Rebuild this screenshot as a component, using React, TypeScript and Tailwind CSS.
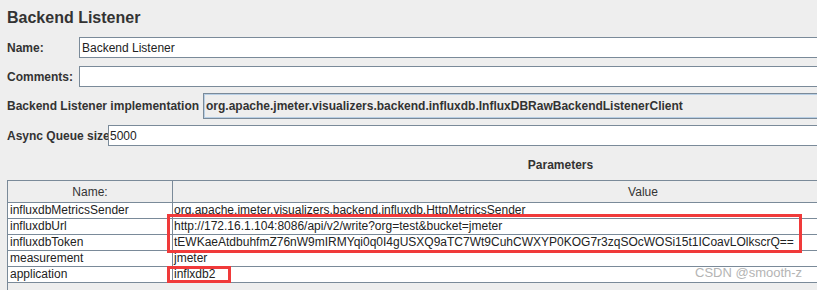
import React from "react";

const params: [string, string][] = [
  ["influxdbMetricsSender", "org.apache.jmeter.visualizers.backend.influxdb.HttpMetricsSender"],
  ["influxdbUrl", "http://172.16.1.104:8086/api/v2/write?org=test&bucket=jmeter"],
  ["influxdbToken", "tEWKaeAtdbuhfmZ76nW9mIRMYqi0q0I4gUSXQ9aTC7Wt9CuhCWXYP0KOG7r3zqSOcWOSi15t1ICoavLOlkscrQ=="],
  ["measurement", "jmeter"],
  ["application", "inflxdb2"],
];

export default function App() {
  return (
    <div className="relative w-[817px] h-[290px] overflow-hidden bg-[#eeeeee] font-['Liberation_Sans',Arial,sans-serif] text-[12px] text-[#333333]">
      <div className="w-[1121px] px-[7px]">
        <div className="h-[37px] pt-[8px] text-[16px] leading-[20px] font-bold">Backend Listener</div>

        <div className="flex items-center h-[21px]">
          <span className="w-[72px] font-bold">Name:</span>
          <div className="flex-1 h-full bg-white border border-[#7a8a99] pl-[2px] flex items-center text-[#222]">
            Backend Listener
          </div>
        </div>

        <div className="flex items-center h-[21px] mt-[8px]">
          <span className="w-[72px] font-bold">Comments:</span>
          <div className="flex-1 h-full bg-white border border-[#7a8a99]" />
        </div>

        <div className="flex items-center h-[26px] mt-[6px]">
          <span className="w-[196px] font-bold">Backend Listener implementation</span>
          <div className="flex-1 h-full bg-[#eeeeee] border border-[#7a8a99] shadow-[inset_0_0_0_1px_#b8cfe5] pl-[2px] flex items-center font-bold">
            org.apache.jmeter.visualizers.backend.influxdb.InfluxDBRawBackendListenerClient
          </div>
        </div>

        <div className="flex items-center h-[21px] mt-[6px]">
          <span className="w-[101px] font-bold whitespace-nowrap">Async Queue size</span>
          <div className="flex-1 h-full bg-white border border-[#7a8a99] pl-[1px] flex items-center text-[#222]">
            5000
          </div>
        </div>

        <div className="h-[34px] pt-[12px] leading-[14px] font-bold text-center">Parameters</div>

        <div className="h-[200px] border border-[#7a8a99] bg-[#eeeeee]">
          <div className="flex h-[22px] border-b border-[#7a8a99]">
            <div className="w-[165px] border-r border-[#7a8a99] flex items-center justify-center">Name:</div>
            <div className="flex-1 flex items-center justify-center">Value</div>
          </div>
          {params.map(([name, value]) => (
            <div key={name} className="flex h-[16px] bg-white border-b border-[#7a8a99] leading-[15px] text-[#222]">
              <div className="w-[165px] border-r border-[#7a8a99] pl-[2px] whitespace-nowrap overflow-hidden">{name}</div>
              <div className="flex-1 pl-[1px] whitespace-nowrap overflow-hidden">{value}</div>
            </div>
          ))}
        </div>
      </div>

      <div className="absolute left-[167px] top-[214px] w-[635px] h-[39px] border-[3px] border-[#f03a3a]" />
      <div className="absolute left-[167px] top-[266px] w-[64px] h-[17px] border-[3px] border-[#f03a3a]" />
      <div className="absolute left-[695px] top-[265px] text-[13px] leading-[16px] text-[#b4b4b4]">CSDN @smooth-z</div>
    </div>
  );
}
